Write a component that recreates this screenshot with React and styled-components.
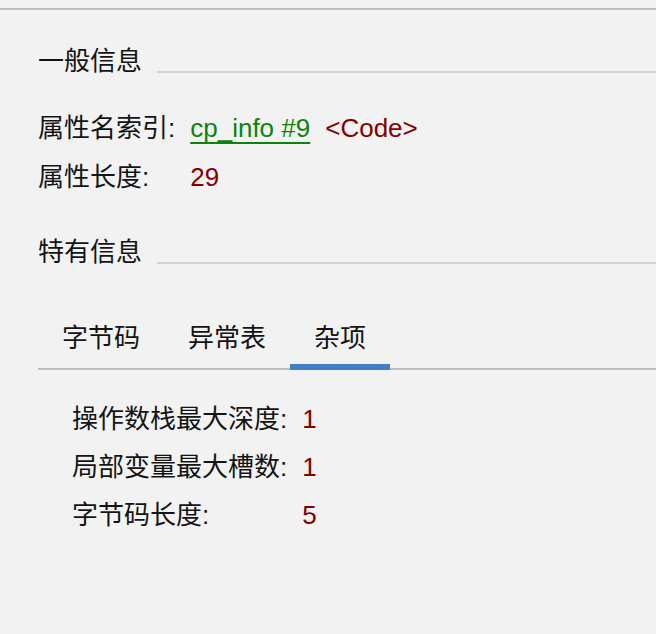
import * as React from 'react';
import styled, { createGlobalStyle } from 'styled-components';

const GlobalStyle = createGlobalStyle`
  html, body {
    margin: 0;
    padding: 0;
    background: #f2f2f2;
  }
  body {
    font-family: "Liberation Sans", "Noto Sans CJK SC", sans-serif;
    font-size: 26px;
    color: #141414;
  }
`;

const Page = styled.div`
  width: 656px;
  height: 634px;
  padding-top: 8px;
  box-sizing: border-box;
  background: #f2f2f2;
`;

const TopRule = styled.div`
  height: 2px;
  background: #bdbdbd;
`;

const Content = styled.div`
  padding-left: 38px;
`;

const SectionHeader = styled.div`
  display: flex;
  align-items: flex-end;
  margin-top: ${({ $top }) => $top}px;
  line-height: 30px;
`;

const SectionTitle = styled.span`
  white-space: nowrap;
`;

const SectionRule = styled.div`
  flex: 1;
  margin-left: 15px;
  margin-bottom: 3px;
  height: 2px;
  background: #d2d2d2;
`;

const InfoGrid = styled.div`
  display: grid;
  grid-template-columns: max-content max-content;
  column-gap: 15px;
  row-gap: ${({ $gap }) => $gap}px;
  line-height: 30px;
  margin-top: ${({ $top }) => $top}px;
  padding-left: ${({ $indent }) => $indent || 0}px;
`;

const Label = styled.span`
  white-space: nowrap;
`;

const Value = styled.span`
  display: flex;
  gap: 15px;
  white-space: nowrap;
  color: #840000;
`;

const Link = styled.a`
  color: #0a840a;
  text-decoration: underline;
  text-decoration-thickness: 2px;
  text-decoration-skip-ink: none;
  text-underline-offset: 5px;
  cursor: pointer;
`;

const TabBar = styled.div`
  display: flex;
  margin-top: 56px;
  border-bottom: 2px solid #bdbdbd;
`;

const Tab = styled.div`
  position: relative;
  padding: 0 24px;
  line-height: 30px;
  height: 45px;
  white-space: nowrap;
  cursor: pointer;
  &::after {
    content: '';
    position: absolute;
    left: 0;
    right: 0;
    bottom: -2px;
    height: 6px;
    background: ${({ $active }) => ($active ? '#3e80c8' : 'transparent')};
  }
`;

const generalRows = [
  { label: '属性名索引:', link: 'cp_info #9', value: '<Code>' },
  { label: '属性长度:', value: '29' },
];

const miscRows = [
  { label: '操作数栈最大深度:', value: '1' },
  { label: '局部变量最大槽数:', value: '1' },
  { label: '字节码长度:', value: '5' },
];

const tabs = ['字节码', '异常表', '杂项'];

export default function App() {
  const [active, setActive] = React.useState(2);

  return (
    <>
      <GlobalStyle />
      <Page>
        <TopRule />
        <Content>
          <SectionHeader $top={36}>
            <SectionTitle>一般信息</SectionTitle>
            <SectionRule />
          </SectionHeader>
          <InfoGrid $top={37} $gap={19}>
            {generalRows.map((row) => (
              <React.Fragment key={row.label}>
                <Label>{row.label}</Label>
                <Value>
                  {row.link && <Link>{row.link}</Link>}
                  <span>{row.value}</span>
                </Value>
              </React.Fragment>
            ))}
          </InfoGrid>
          <SectionHeader $top={45}>
            <SectionTitle>特有信息</SectionTitle>
            <SectionRule />
          </SectionHeader>
          <TabBar>
            {tabs.map((t, i) => (
              <Tab key={t} $active={i === active} onClick={() => setActive(i)}>
                {t}
              </Tab>
            ))}
          </TabBar>
          <InfoGrid $top={34} $gap={18} $indent={34}>
            {miscRows.map((row) => (
              <React.Fragment key={row.label}>
                <Label>{row.label}</Label>
                <Value>{row.value}</Value>
              </React.Fragment>
            ))}
          </InfoGrid>
        </Content>
      </Page>
    </>
  );
}
